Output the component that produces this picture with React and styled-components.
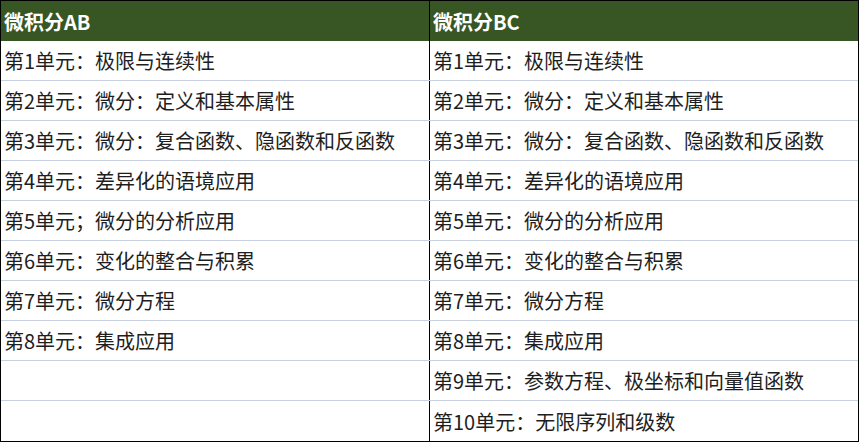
import React from "react";
import styled, { createGlobalStyle } from "styled-components";

const GlobalStyle = createGlobalStyle`
  html, body {
    margin: 0;
    padding: 0;
    background: #ffffff;
  }
  body {
    font-family: "Noto Sans CJK SC", "Noto Sans", sans-serif;
  }
`;

const ab = [
    "第1单元：极限与连续性",
    "第2单元：微分：定义和基本属性",
    "第3单元：微分：复合函数、隐函数和反函数",
    "第4单元：差异化的语境应用",
    "第5单元；微分的分析应用",
    "第6单元：变化的整合与积累",
    "第7单元：微分方程",
    "第8单元：集成应用",
    "",
    "",
];

const bc = [
    "第1单元：极限与连续性",
    "第2单元：微分：定义和基本属性",
    "第3单元：微分：复合函数、隐函数和反函数",
    "第4单元：差异化的语境应用",
    "第5单元：微分的分析应用",
    "第6单元：变化的整合与积累",
    "第7单元：微分方程",
    "第8单元：集成应用",
    "第9单元：参数方程、极坐标和向量值函数",
    "第10单元：无限序列和级数",
];

function App() {
    return (
        <>
            <GlobalStyle />
            <Table>
                <HeadRow>
                    <HeadCell left>微积分AB</HeadCell>
                    <HeadCell>微积分BC</HeadCell>
                </HeadRow>
                {ab.map((text, i) => (
                    <Row key={i} last={i === ab.length - 1}>
                        <Cell left>{text}</Cell>
                        <Cell>{bc[i]}</Cell>
                    </Row>
                ))}
            </Table>
        </>
    );
}

export default App;

const Table = styled.div`
    width: 859px;
    box-sizing: border-box;
    border: 1px solid #000000;
    display: flex;
    flex-direction: column;
`
const HeadRow = styled.div`
    display: grid;
    grid-template-columns: 429px 428px;
    height: 40px;
    background-color: #375623;
`
const HeadCell = styled.div`
    display: flex;
    align-items: center;
    padding: 0 3px;
    box-sizing: border-box;
    color: #ffffff;
    font-size: 20px;
    font-weight: 700;
    border-right: ${(props) => (props.left ? "1px solid #000000" : "none")};
`
const Row = styled.div`
    display: grid;
    grid-template-columns: 429px 428px;
    height: 40px;
    box-sizing: border-box;
    border-bottom: ${(props) => (props.last ? "none" : "1px solid #c9d0e1")};
`
const Cell = styled.div`
    display: flex;
    align-items: center;
    padding: 0 3px;
    box-sizing: border-box;
    color: #1e1e1e;
    font-size: 20px;
    white-space: nowrap;
    border-right: ${(props) => (props.left ? "1px solid #000000" : "none")};
`
